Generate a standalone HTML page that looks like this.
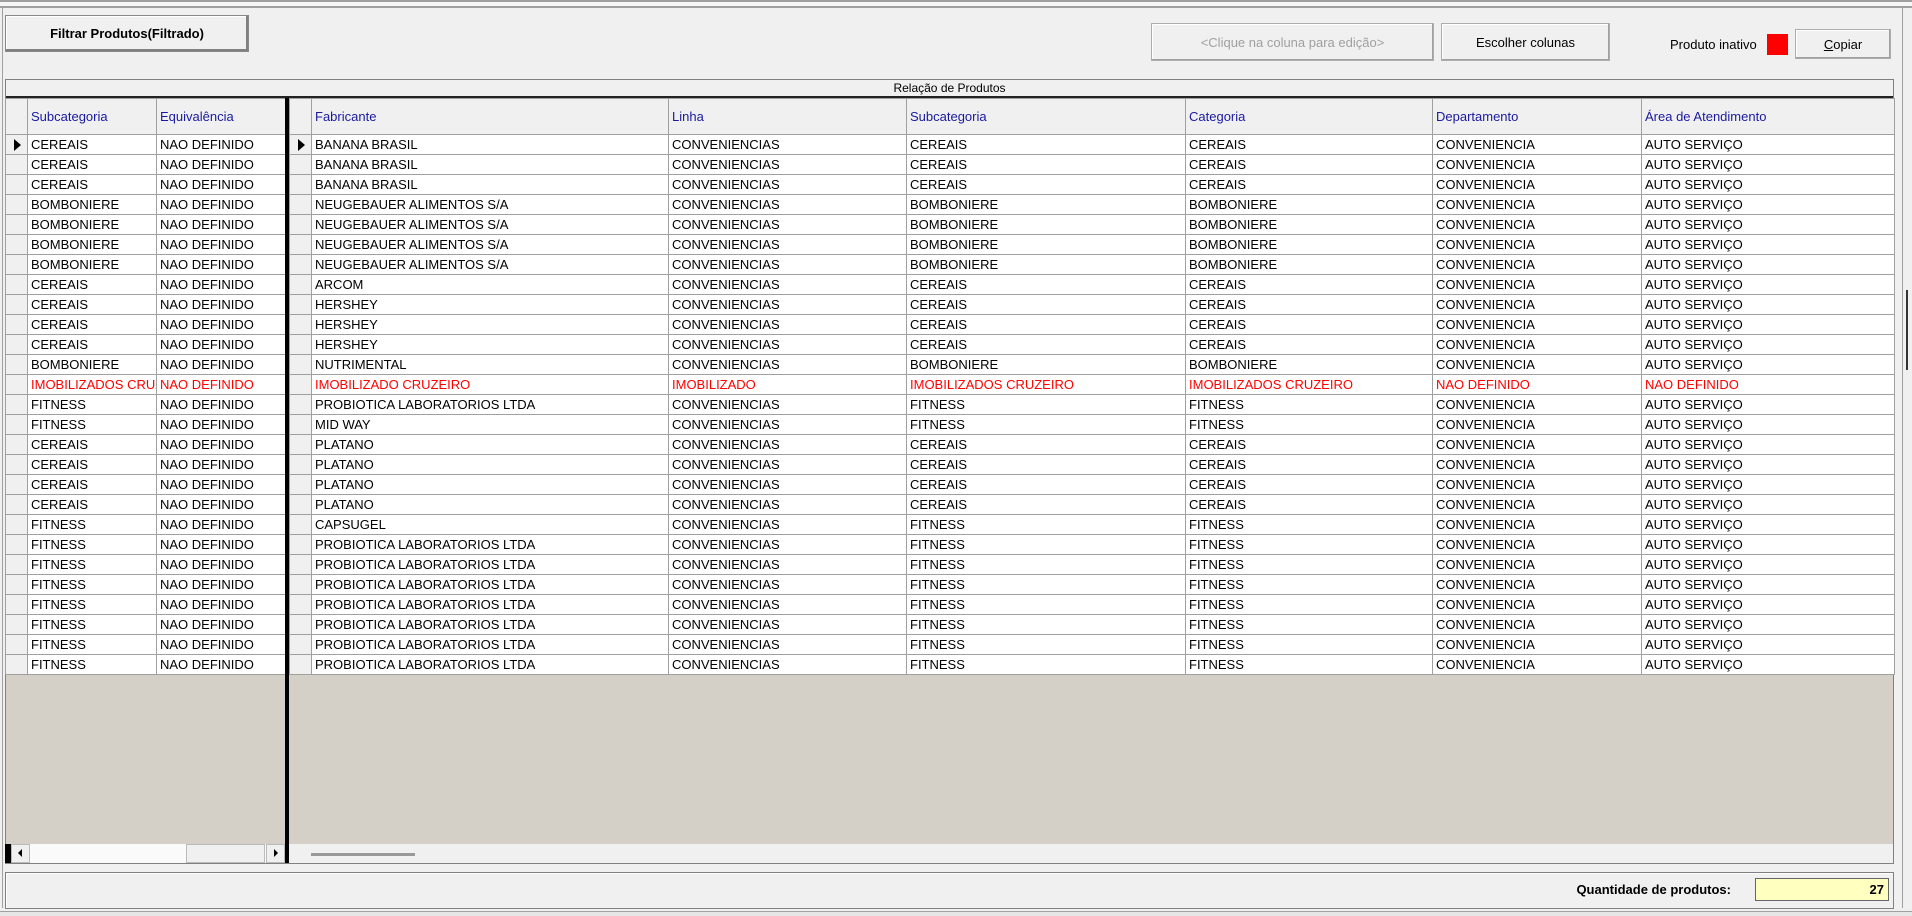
<!DOCTYPE html>
<html><head><meta charset="utf-8"><style>
*{box-sizing:border-box;margin:0;padding:0}
body{width:1912px;height:916px;background:#f0f0f0;font-family:"Liberation Sans",Arial,sans-serif;font-size:13px;position:relative;overflow:hidden;color:#000}
.abs{position:absolute}
.btn{position:absolute;background:#f0f0f0;border:1px solid #adadad;box-shadow:inset -1px -1px 0 #a0a0a0,inset 1px 1px 0 #fff;display:flex;align-items:center;justify-content:center;font-size:13px}
table{border-collapse:collapse;table-layout:fixed;position:absolute}
td{height:20px;border:1px solid #a0a0a0;padding:0 3px;white-space:nowrap;overflow:hidden;background:#fff;line-height:18px;letter-spacing:0}
td.i{background:#f0f0f0;padding:0}
tr.h td{height:36px;color:#1a1aa0;background:#f0f0f0;letter-spacing:0}
tr.r td{color:#f00}
.tri{display:block;width:0;height:0;border-left:7px solid #000;border-top:6px solid transparent;border-bottom:6px solid transparent;margin-left:8px}
</style></head><body>
<div class="abs" style="left:0;top:0;width:1912px;height:8px;border-top:2px solid #a0a0a0;border-bottom:2px solid #a0a0a0;background:#f6f6f6"></div>
<div class="abs" style="left:0;top:8px;width:3px;height:900px;border-right:1px solid #a0a0a0"></div>
<div class="abs" style="left:1902px;top:8px;width:2px;height:900px;border-left:1px solid #a0a0a0"></div>
<div class="abs" style="left:1906px;top:290px;width:6px;height:80px;border-left:2px solid #333"></div>

<div class="btn" style="left:5px;top:15px;width:244px;height:37px;font-weight:bold;border-color:#888;box-shadow:inset -2px -2px 0 #808080,inset 1px 1px 0 #fff">Filtrar Produtos(Filtrado)</div>
<div class="btn" style="left:1151px;top:23px;width:283px;height:38px;color:#a0a0a0">&lt;Clique na coluna para edição&gt;</div>
<div class="btn" style="left:1441px;top:23px;width:169px;height:38px">Escolher colunas</div>
<div class="abs" style="left:1670px;top:37px">Produto inativo</div>
<div class="abs" style="left:1767px;top:34px;width:21px;height:21px;background:#f00"></div>
<div class="btn" style="left:1795px;top:29px;width:96px;height:30px"><u>C</u>opiar</div>

<div class="abs" style="left:5px;top:79px;width:1889px;height:785px;border:1px solid #808080;background:#d4d0c8"></div>
<div class="abs" style="left:6px;top:80px;width:1887px;height:18px;background:#f0f0f0;border-bottom:2px solid #222;text-align:center;font-size:12px;line-height:17px">Relação de Produtos</div>
<div class="abs" style="left:6px;top:844px;width:1887px;height:19px;background:#f0f0f0"></div>

<table style="left:5px;top:98px;width:281px">
<colgroup><col style="width:22px"><col style="width:129px"><col style="width:130px"></colgroup>
<tr class="h"><td class="i"></td><td>Subcategoria</td><td>Equivalência</td></tr>
<tr><td class="i"><span class="tri"></span></td><td>CEREAIS</td><td>NAO DEFINIDO</td></tr>
<tr><td class="i"></td><td>CEREAIS</td><td>NAO DEFINIDO</td></tr>
<tr><td class="i"></td><td>CEREAIS</td><td>NAO DEFINIDO</td></tr>
<tr><td class="i"></td><td>BOMBONIERE</td><td>NAO DEFINIDO</td></tr>
<tr><td class="i"></td><td>BOMBONIERE</td><td>NAO DEFINIDO</td></tr>
<tr><td class="i"></td><td>BOMBONIERE</td><td>NAO DEFINIDO</td></tr>
<tr><td class="i"></td><td>BOMBONIERE</td><td>NAO DEFINIDO</td></tr>
<tr><td class="i"></td><td>CEREAIS</td><td>NAO DEFINIDO</td></tr>
<tr><td class="i"></td><td>CEREAIS</td><td>NAO DEFINIDO</td></tr>
<tr><td class="i"></td><td>CEREAIS</td><td>NAO DEFINIDO</td></tr>
<tr><td class="i"></td><td>CEREAIS</td><td>NAO DEFINIDO</td></tr>
<tr><td class="i"></td><td>BOMBONIERE</td><td>NAO DEFINIDO</td></tr>
<tr class="r"><td class="i"></td><td>IMOBILIZADOS CRUZEIRO</td><td>NAO DEFINIDO</td></tr>
<tr><td class="i"></td><td>FITNESS</td><td>NAO DEFINIDO</td></tr>
<tr><td class="i"></td><td>FITNESS</td><td>NAO DEFINIDO</td></tr>
<tr><td class="i"></td><td>CEREAIS</td><td>NAO DEFINIDO</td></tr>
<tr><td class="i"></td><td>CEREAIS</td><td>NAO DEFINIDO</td></tr>
<tr><td class="i"></td><td>CEREAIS</td><td>NAO DEFINIDO</td></tr>
<tr><td class="i"></td><td>CEREAIS</td><td>NAO DEFINIDO</td></tr>
<tr><td class="i"></td><td>FITNESS</td><td>NAO DEFINIDO</td></tr>
<tr><td class="i"></td><td>FITNESS</td><td>NAO DEFINIDO</td></tr>
<tr><td class="i"></td><td>FITNESS</td><td>NAO DEFINIDO</td></tr>
<tr><td class="i"></td><td>FITNESS</td><td>NAO DEFINIDO</td></tr>
<tr><td class="i"></td><td>FITNESS</td><td>NAO DEFINIDO</td></tr>
<tr><td class="i"></td><td>FITNESS</td><td>NAO DEFINIDO</td></tr>
<tr><td class="i"></td><td>FITNESS</td><td>NAO DEFINIDO</td></tr>
<tr><td class="i"></td><td>FITNESS</td><td>NAO DEFINIDO</td></tr>
</table>
<div class="abs" style="left:285px;top:98px;width:4px;height:765px;background:#000"></div>

<table style="left:289px;top:98px;width:1605px">
<colgroup><col style="width:22px"><col style="width:357px"><col style="width:238px"><col style="width:279px"><col style="width:247px"><col style="width:209px"><col style="width:253px"></colgroup>
<tr class="h"><td class="i"></td><td>Fabricante</td><td>Linha</td><td>Subcategoria</td><td>Categoria</td><td>Departamento</td><td>Área de Atendimento</td></tr>
<tr><td class="i"><span class="tri"></span></td><td>BANANA BRASIL</td><td>CONVENIENCIAS</td><td>CEREAIS</td><td>CEREAIS</td><td>CONVENIENCIA</td><td>AUTO SERVIÇO</td></tr>
<tr><td class="i"></td><td>BANANA BRASIL</td><td>CONVENIENCIAS</td><td>CEREAIS</td><td>CEREAIS</td><td>CONVENIENCIA</td><td>AUTO SERVIÇO</td></tr>
<tr><td class="i"></td><td>BANANA BRASIL</td><td>CONVENIENCIAS</td><td>CEREAIS</td><td>CEREAIS</td><td>CONVENIENCIA</td><td>AUTO SERVIÇO</td></tr>
<tr><td class="i"></td><td>NEUGEBAUER ALIMENTOS S/A</td><td>CONVENIENCIAS</td><td>BOMBONIERE</td><td>BOMBONIERE</td><td>CONVENIENCIA</td><td>AUTO SERVIÇO</td></tr>
<tr><td class="i"></td><td>NEUGEBAUER ALIMENTOS S/A</td><td>CONVENIENCIAS</td><td>BOMBONIERE</td><td>BOMBONIERE</td><td>CONVENIENCIA</td><td>AUTO SERVIÇO</td></tr>
<tr><td class="i"></td><td>NEUGEBAUER ALIMENTOS S/A</td><td>CONVENIENCIAS</td><td>BOMBONIERE</td><td>BOMBONIERE</td><td>CONVENIENCIA</td><td>AUTO SERVIÇO</td></tr>
<tr><td class="i"></td><td>NEUGEBAUER ALIMENTOS S/A</td><td>CONVENIENCIAS</td><td>BOMBONIERE</td><td>BOMBONIERE</td><td>CONVENIENCIA</td><td>AUTO SERVIÇO</td></tr>
<tr><td class="i"></td><td>ARCOM</td><td>CONVENIENCIAS</td><td>CEREAIS</td><td>CEREAIS</td><td>CONVENIENCIA</td><td>AUTO SERVIÇO</td></tr>
<tr><td class="i"></td><td>HERSHEY</td><td>CONVENIENCIAS</td><td>CEREAIS</td><td>CEREAIS</td><td>CONVENIENCIA</td><td>AUTO SERVIÇO</td></tr>
<tr><td class="i"></td><td>HERSHEY</td><td>CONVENIENCIAS</td><td>CEREAIS</td><td>CEREAIS</td><td>CONVENIENCIA</td><td>AUTO SERVIÇO</td></tr>
<tr><td class="i"></td><td>HERSHEY</td><td>CONVENIENCIAS</td><td>CEREAIS</td><td>CEREAIS</td><td>CONVENIENCIA</td><td>AUTO SERVIÇO</td></tr>
<tr><td class="i"></td><td>NUTRIMENTAL</td><td>CONVENIENCIAS</td><td>BOMBONIERE</td><td>BOMBONIERE</td><td>CONVENIENCIA</td><td>AUTO SERVIÇO</td></tr>
<tr class="r"><td class="i"></td><td>IMOBILIZADO CRUZEIRO</td><td>IMOBILIZADO</td><td>IMOBILIZADOS CRUZEIRO</td><td>IMOBILIZADOS CRUZEIRO</td><td>NAO DEFINIDO</td><td>NAO DEFINIDO</td></tr>
<tr><td class="i"></td><td>PROBIOTICA LABORATORIOS LTDA</td><td>CONVENIENCIAS</td><td>FITNESS</td><td>FITNESS</td><td>CONVENIENCIA</td><td>AUTO SERVIÇO</td></tr>
<tr><td class="i"></td><td>MID WAY</td><td>CONVENIENCIAS</td><td>FITNESS</td><td>FITNESS</td><td>CONVENIENCIA</td><td>AUTO SERVIÇO</td></tr>
<tr><td class="i"></td><td>PLATANO</td><td>CONVENIENCIAS</td><td>CEREAIS</td><td>CEREAIS</td><td>CONVENIENCIA</td><td>AUTO SERVIÇO</td></tr>
<tr><td class="i"></td><td>PLATANO</td><td>CONVENIENCIAS</td><td>CEREAIS</td><td>CEREAIS</td><td>CONVENIENCIA</td><td>AUTO SERVIÇO</td></tr>
<tr><td class="i"></td><td>PLATANO</td><td>CONVENIENCIAS</td><td>CEREAIS</td><td>CEREAIS</td><td>CONVENIENCIA</td><td>AUTO SERVIÇO</td></tr>
<tr><td class="i"></td><td>PLATANO</td><td>CONVENIENCIAS</td><td>CEREAIS</td><td>CEREAIS</td><td>CONVENIENCIA</td><td>AUTO SERVIÇO</td></tr>
<tr><td class="i"></td><td>CAPSUGEL</td><td>CONVENIENCIAS</td><td>FITNESS</td><td>FITNESS</td><td>CONVENIENCIA</td><td>AUTO SERVIÇO</td></tr>
<tr><td class="i"></td><td>PROBIOTICA LABORATORIOS LTDA</td><td>CONVENIENCIAS</td><td>FITNESS</td><td>FITNESS</td><td>CONVENIENCIA</td><td>AUTO SERVIÇO</td></tr>
<tr><td class="i"></td><td>PROBIOTICA LABORATORIOS LTDA</td><td>CONVENIENCIAS</td><td>FITNESS</td><td>FITNESS</td><td>CONVENIENCIA</td><td>AUTO SERVIÇO</td></tr>
<tr><td class="i"></td><td>PROBIOTICA LABORATORIOS LTDA</td><td>CONVENIENCIAS</td><td>FITNESS</td><td>FITNESS</td><td>CONVENIENCIA</td><td>AUTO SERVIÇO</td></tr>
<tr><td class="i"></td><td>PROBIOTICA LABORATORIOS LTDA</td><td>CONVENIENCIAS</td><td>FITNESS</td><td>FITNESS</td><td>CONVENIENCIA</td><td>AUTO SERVIÇO</td></tr>
<tr><td class="i"></td><td>PROBIOTICA LABORATORIOS LTDA</td><td>CONVENIENCIAS</td><td>FITNESS</td><td>FITNESS</td><td>CONVENIENCIA</td><td>AUTO SERVIÇO</td></tr>
<tr><td class="i"></td><td>PROBIOTICA LABORATORIOS LTDA</td><td>CONVENIENCIAS</td><td>FITNESS</td><td>FITNESS</td><td>CONVENIENCIA</td><td>AUTO SERVIÇO</td></tr>
<tr><td class="i"></td><td>PROBIOTICA LABORATORIOS LTDA</td><td>CONVENIENCIAS</td><td>FITNESS</td><td>FITNESS</td><td>CONVENIENCIA</td><td>AUTO SERVIÇO</td></tr>
</table>

<div class="abs" style="left:5px;top:844px;width:6px;height:19px;background:#000"></div>
<div class="abs" style="left:11px;top:844px;width:19px;height:19px;background:#f0f0f0;border:1px solid #bbb"><div style="margin:4px 0 0 6px;width:0;height:0;border-right:4px solid #000;border-top:4px solid transparent;border-bottom:4px solid transparent"></div></div>
<div class="abs" style="left:30px;top:844px;width:241px;height:19px;background:#fafafa"></div>
<div class="abs" style="left:186px;top:844px;width:79px;height:19px;background:#f0f0f0;border:1px solid #bbb"></div>
<div class="abs" style="left:266px;top:844px;width:19px;height:19px;background:#f0f0f0;border:1px solid #bbb"><div style="margin:4px 0 0 7px;width:0;height:0;border-left:4px solid #000;border-top:4px solid transparent;border-bottom:4px solid transparent"></div></div>
<div class="abs" style="left:311px;top:853px;width:104px;height:3px;background:#999"></div>

<div class="abs" style="left:5px;top:872px;width:1889px;height:37px;border:1px solid #808080;box-shadow:inset 1px 1px 0 #fff"></div>
<div class="abs" style="left:1500px;top:882px;width:231px;text-align:right;font-weight:bold;font-size:13px">Quantidade de produtos:</div>
<div class="abs" style="left:1755px;top:878px;width:134px;height:23px;background:#ffffc0;border:1px solid #666;text-align:right;font-weight:bold;padding-right:4px;line-height:21px">27</div>
<div class="abs" style="left:0;top:911px;width:1912px;height:5px;border-top:1px solid #a0a0a0;background:#e6e6e6"></div>
</body></html>
